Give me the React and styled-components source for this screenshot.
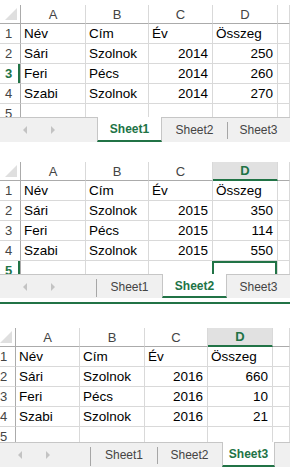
import React from 'react';
import styled, { createGlobalStyle, css } from 'styled-components';

const GREEN = '#217346';
const GRID = '#d9d9d9';
const HEAD_LINE = '#ababab';

const Global = createGlobalStyle`
  html, body { margin: 0; padding: 0; background: #fff; }
  body { font-family: "Liberation Sans", Arial, sans-serif; }
`;

const Page = styled.div`
  width: 290px;
  height: 467px;
  overflow: hidden;
  display: flex;
  flex-direction: column;
  background: #fff;
`;

const Sheet = styled.section`
  margin-top: ${(p) => p.$top}px;
  width: 290px;
  overflow: hidden;
  flex: none;
`;

const Grid = styled.div`
  display: grid;
  grid-template-columns: ${(p) => p.$cols};
  grid-template-rows: ${(p) => p.$head}px repeat(5, 20px);
  height: ${(p) => p.$height}px;
  margin-left: ${(p) => -p.$shift}px;
  overflow: hidden;
  font-size: 13.5px;
  color: #000;
`;

const Corner = styled.div`
  position: relative;
  box-sizing: border-box;
  border-right: 1px solid ${HEAD_LINE};
  border-bottom: 1px solid ${HEAD_LINE};
  &::after {
    content: '';
    position: absolute;
    right: 3px;
    bottom: 3px;
    width: 0;
    height: 0;
    border-left: 12px solid transparent;
    border-bottom: 12px solid #dfdfdf;
  }
`;

const ColHead = styled.div`
  box-sizing: border-box;
  display: flex;
  align-items: center;
  justify-content: center;
  font-size: 13px;
  color: #444;
  border-right: 1px solid ${GRID};
  border-bottom: 1px solid ${HEAD_LINE};
  ${(p) =>
    p.$active &&
    css`
      background: #e1e1e1;
      color: ${GREEN};
      font-weight: bold;
      border-bottom: 2px solid ${GREEN};
    `}
`;

const RowHead = styled.div`
  box-sizing: border-box;
  display: flex;
  align-items: center;
  justify-content: center;
  padding-right: 3px;
  font-size: 13px;
  color: #444;
  border-right: 1px solid ${HEAD_LINE};
  border-bottom: 1px solid ${GRID};
  ${(p) =>
    p.$active &&
    css`
      color: ${GREEN};
      font-weight: bold;
      box-shadow: inset -2px 0 0 ${GREEN};
    `}
`;

const Cell = styled.div`
  box-sizing: border-box;
  display: flex;
  align-items: center;
  justify-content: ${(p) => (p.$num ? 'flex-end' : 'flex-start')};
  padding: 0 ${(p) => (p.$num ? 4 : 3)}px 0 3px;
  white-space: nowrap;
  border-right: 1px solid ${GRID};
  border-bottom: 1px solid ${GRID};
  ${(p) =>
    p.$sel &&
    css`
      box-shadow: inset 0 0 0 2px ${GREEN};
      margin-left: -1px;
    `}
`;

const TabBar = styled.div`
  display: flex;
  height: ${(p) => p.$h}px;
  box-sizing: border-box;
  background: #f0f0f0;
  border-top: 1px solid #c6c6c6;
`;

const Nav = styled.div`
  width: ${(p) => p.$w}px;
  flex: none;
  display: flex;
  align-items: center;
  gap: 24px;
  padding-left: ${(p) => p.$pad}px;
  box-sizing: border-box;
  position: relative;
  ${(p) =>
    p.$sep &&
    css`
      &::after {
        content: '';
        position: absolute;
        right: 0;
        top: 4px;
        bottom: 1px;
        width: 1px;
        background: #a6a6a6;
      }
    `}
`;

const Arrow = styled.span`
  width: 0;
  height: 0;
  border-top: 4px solid transparent;
  border-bottom: 4px solid transparent;
  ${(p) =>
    p.$dir === 'left'
      ? css`border-right: 4px solid #c3c3c3;`
      : css`border-left: 4px solid #c3c3c3;`}
`;

const Tab = styled.div`
  width: ${(p) => p.$w}px;
  flex: none;
  box-sizing: border-box;
  display: flex;
  align-items: center;
  justify-content: center;
  font-size: 12px;
  color: #444;
  position: relative;
  ${(p) =>
    p.$sep &&
    css`
      &::before {
        content: '';
        position: absolute;
        left: 0;
        top: 4px;
        bottom: 3px;
        width: 1px;
        background: #a6a6a6;
      }
    `}
  ${(p) =>
    p.$active &&
    css`
      background: #fff;
      margin-top: -1px;
      color: ${GREEN};
      font-weight: bold;
      border-left: 1px solid #c6c6c6;
      border-right: 1px solid #c6c6c6;
      border-bottom: 2px solid ${GREEN};
      padding-top: 1px;
    `}
`;

const GreenRule = styled.div`
  height: 2px;
  margin-top: 4px;
  background: ${GREEN};
  flex: none;
`;

const ROWS = [
  ['Név', 'Cím', 'Év', 'Összeg'],
  ['Sári', 'Szolnok', null, null],
  ['Feri', 'Pécs', null, null],
  ['Szabi', 'Szolnok', null, null],
];

function Spreadsheet({ cfg }) {
  const cols = ['A', 'B', 'C', 'D'];
  const rows = ROWS.map((r, i) =>
    i === 0 ? r : [r[0], r[1], String(cfg.year), String(cfg.sums[i - 1])]
  );
  return (
    <Sheet $top={cfg.top}>
      <Grid
        $cols={cfg.cols}
        $head={cfg.head}
        $height={cfg.height}
        $shift={cfg.shift}
      >
        <Corner />
        {cols.map((c) => (
          <ColHead key={c} $active={cfg.activeCol === c}>
            {c}
          </ColHead>
        ))}
        <ColHead />
        {[...rows, ['', '', '', '']].map((r, i) => (
          <React.Fragment key={i}>
            <RowHead $active={cfg.activeRow === i + 1}>{i + 1}</RowHead>
            {r.map((v, j) => (
              <Cell
                key={j}
                $num={i > 0 && j >= 2}
                $sel={cfg.sel && cfg.sel[0] === i + 1 && cfg.sel[1] === j}
              >
                {v}
              </Cell>
            ))}
            <Cell />
          </React.Fragment>
        ))}
      </Grid>
      <TabBar $h={cfg.tabH}>
        <Nav $w={cfg.navW} $pad={cfg.navPad} $sep={cfg.navSep}>
          <Arrow $dir="left" />
          <Arrow $dir="right" />
        </Nav>
        {cfg.tabs.map((t) => (
          <Tab key={t.name} $w={t.w} $active={t.active} $sep={t.sep}>
            {t.name}
          </Tab>
        ))}
      </TabBar>
    </Sheet>
  );
}

const SHEETS = [
  {
    top: 5,
    cols: '21px 65px 63px 64px 65px 1fr',
    head: 19,
    height: 112,
    shift: 0,
    year: 2014,
    sums: [250, 260, 270],
    activeRow: 3,
    activeCol: null,
    sel: null,
    tabH: 25,
    navW: 97,
    navPad: 23,
    navSep: false,
    tabs: [
      { name: 'Sheet1', w: 65, active: true },
      { name: 'Sheet2', w: 65 },
      { name: 'Sheet3', w: 63, sep: true },
    ],
  },
  {
    top: 20,
    cols: '21px 65px 63px 64px 65px 1fr',
    head: 19,
    height: 112,
    shift: 0,
    year: 2015,
    sums: [350, 114, 550],
    activeRow: 5,
    activeCol: 'D',
    sel: [5, 3],
    tabH: 24,
    navW: 97,
    navPad: 23,
    navSep: true,
    tabs: [
      { name: 'Sheet1', w: 65 },
      { name: 'Sheet2', w: 65, active: true },
      { name: 'Sheet3', w: 63 },
    ],
  },
  {
    top: 24,
    cols: '21px 64px 65px 63px 65px 1fr',
    head: 19,
    height: 114,
    shift: 5,
    year: 2016,
    sums: [660, 10, 21],
    activeRow: null,
    activeCol: 'D',
    sel: null,
    tabH: 25,
    navW: 91,
    navPad: 18,
    navSep: true,
    tabs: [
      { name: 'Sheet1', w: 66 },
      { name: 'Sheet2', w: 65, sep: true },
      { name: 'Sheet3', w: 53, active: true },
    ],
  },
];

export default function App() {
  return (
    <Page>
      <Global />
      <Spreadsheet cfg={SHEETS[0]} />
      <Spreadsheet cfg={SHEETS[1]} />
      <GreenRule />
      <Spreadsheet cfg={SHEETS[2]} />
    </Page>
  );
}
